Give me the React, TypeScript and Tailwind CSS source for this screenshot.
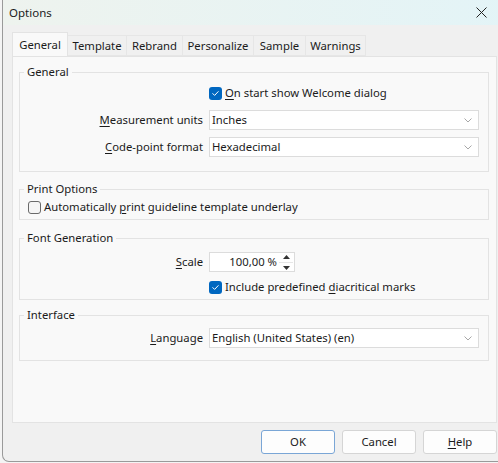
import React from "react";

const font = { fontFamily: '"Noto Sans", "Open Sans", sans-serif' };

function Check({ checked }: { checked: boolean }) {
  if (checked) {
    return (
      <span className="flex h-[13px] w-[13px] shrink-0 items-center justify-center rounded-[3px] bg-[#0067c0]">
        <svg width="9" height="9" viewBox="0 0 9 9">
          <path d="M1.8 4.6 L3.6 6.4 L7.2 2.6" fill="none" stroke="white" strokeWidth="1" strokeLinecap="round" strokeLinejoin="round" />
        </svg>
      </span>
    );
  }
  return <span className="block h-[13px] w-[13px] shrink-0 rounded-[3px] border border-[#6a6a6a] bg-[#f5f5f5]" />;
}

function Chevron() {
  return (
    <svg width="8" height="5" viewBox="0 0 8 5" className="mr-[6px]">
      <path d="M0.5 0.5 L4 4 L7.5 0.5" fill="none" stroke="#909090" strokeWidth="0.8" />
    </svg>
  );
}

function Select({ value }: { value: string }) {
  return (
    <div className="flex h-[20px] w-[270px] items-center justify-between border border-[#dcdcdc] bg-white pl-[2px]">
      <span className="leading-none">{value}</span>
      <Chevron />
    </div>
  );
}

function Row({ label, children }: { label: React.ReactNode; children: React.ReactNode }) {
  return (
    <div className="flex h-[20px] items-center">
      <div className="w-[183px] shrink-0 text-right">{label}</div>
      <div className="ml-[6px]">{children}</div>
    </div>
  );
}

function Group({ title, className, children }: { title: string; className?: string; children: React.ReactNode }) {
  return (
    <fieldset className={"border border-[#e3e3e3] " + (className ?? "")}>
      <legend className="ml-[4px] px-[3px] leading-[16px]">{title}</legend>
      {children}
    </fieldset>
  );
}

function U({ children }: { children: React.ReactNode }) {
  return <span className="underline decoration-[1px] underline-offset-[2px]">{children}</span>;
}

export default function App() {
  const tabs: [string, string][] = [
    ["Template", "w-[59px]"],
    ["Rebrand", "w-[56px]"],
    ["Personalize", "w-[71px]"],
    ["Sample", "w-[52px]"],
    ["Warnings", "w-[60px]"],
  ];
  return (
    <div className="h-[463px] w-[498px] overflow-hidden bg-[#f4f4f4] text-[11.3px] text-[#1b1b1b]" style={font}>
      <div className="ml-[2px] flex h-[462px] w-[510px] flex-col rounded-bl-[7px] border-b border-l border-[#9a9a9a] bg-[#f0f0f0]">
        {/* Title bar */}
        <div className="flex h-[25px] shrink-0 items-center justify-between bg-gradient-to-r from-[#eef3ee] to-[#e3f4f7] pl-[6px]">
          <span className="text-[11.5px]">Options</span>
          <svg width="11" height="11" viewBox="0 0 11 11" className="mr-[25px]">
            <path d="M0.5 0.5 L10.5 10.5 M10.5 0.5 L0.5 10.5" stroke="#222" strokeWidth="1" />
          </svg>
        </div>
        {/* Tabs */}
        <div className="ml-[9px] mt-[8px] flex h-[23px] items-end">
          <div className="relative z-10 flex h-[24px] w-[56px] items-start justify-center border border-b-0 border-[#e3e3e3] bg-[#f9f9f9] pt-[4px]">
            General
          </div>
          {tabs.map(([t, w]) => (
            <div key={t} className={"flex h-[21px] items-center justify-center border border-l-0 border-[#e6e6e6] bg-[#f0f0f0] pt-[1px] " + w}>
              {t}
            </div>
          ))}
        </div>
        {/* Panel */}
        <div className="ml-[9px] h-[367px] w-[485px] border border-[#e3e3e3] bg-[#f9f9f9] pl-[6px] pr-[7px] pt-[7px]">
          <Group title="General" className="pb-[14px]">
            <div className="mt-[3px] flex h-[20px] items-center pl-[189px]">
              <Check checked />
              <span className="ml-[3px]">
                <U>O</U>n start show Welcome dialog
              </span>
            </div>
            <div className="mt-[7px]">
              <Row label={<><U>M</U>easurement units</>}>
                <Select value="Inches" />
              </Row>
            </div>
            <div className="mt-[7px]">
              <Row label={<><U>C</U>ode-point format</>}>
                <Select value="Hexadecimal" />
              </Row>
            </div>
          </Group>
          <Group title="Print Options" className="mt-[9px] pb-[2px]">
            <div className="flex h-[20px] items-center pl-[8px]">
              <Check checked={false} />
              <span className="ml-[3px]">
                Automatically <U>p</U>rint guideline template underlay
              </span>
            </div>
          </Group>
          <Group title="Font Generation" className="mt-[10px] pb-[2px]">
            <div className="mt-[6px]">
              <Row label={<><U>S</U>cale</>}>
                <div className="flex h-[20px] w-[86px] items-center border border-[#dcdcdc] bg-white">
                  <span className="flex-1 pr-[1px] text-right leading-none">100,00 %</span>
                  <div className="flex h-full w-[16px] flex-col items-center justify-center gap-[3px]">
                    <svg width="7" height="4" viewBox="0 0 7 4">
                      <path d="M0 4 L3.5 0 L7 4 Z" fill="#333" />
                    </svg>
                    <div className="h-px w-[14px] bg-[#e6e6e6]" />
                    <svg width="7" height="4" viewBox="0 0 7 4">
                      <path d="M0 0 L3.5 4 L7 0 Z" fill="#333" />
                    </svg>
                  </div>
                </div>
              </Row>
            </div>
            <div className="mt-[5px] flex h-[20px] items-center pl-[189px]">
              <Check checked />
              <span className="ml-[3px]">
                Include predefined <U>d</U>iacritical marks
              </span>
            </div>
          </Group>
          <Group title="Interface" className="mt-[7px] pb-[12px]">
            <div className="mt-[5px]">
              <Row label={<><U>L</U>anguage</>}>
                <Select value="English (United States) (en)" />
              </Row>
            </div>
          </Group>
        </div>
        {/* Buttons */}
        <div className="ml-[258px] mt-[7px] flex gap-[7px]">
          <button className="h-[24px] w-[74px] rounded-[3px] border border-[#7aa6d6] bg-[#fdfdfd]">OK</button>
          <button className="h-[24px] w-[74px] rounded-[3px] border border-[#d5d5d5] bg-[#fdfdfd]">Cancel</button>
          <button className="h-[24px] w-[74px] rounded-[3px] border border-[#d5d5d5] bg-[#fdfdfd]">
            <U>H</U>elp
          </button>
        </div>
      </div>
    </div>
  );
}
